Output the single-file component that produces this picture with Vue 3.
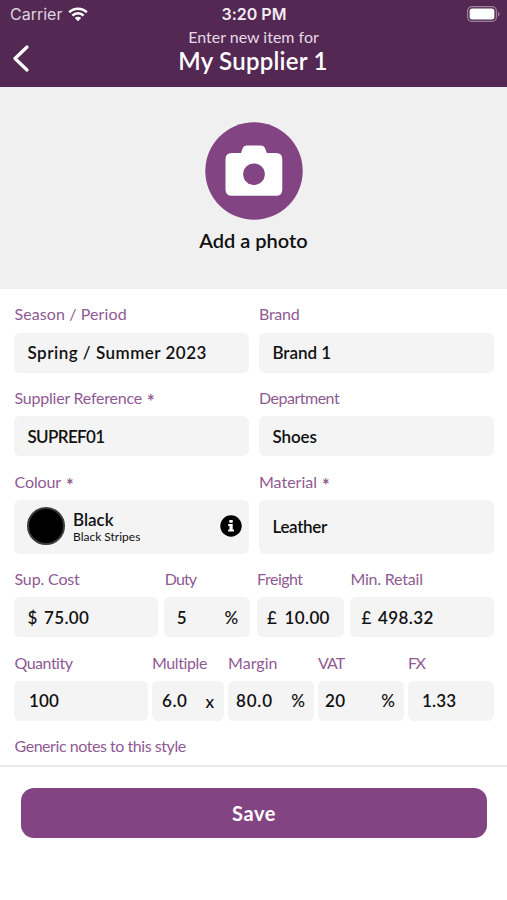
<script setup>
// `track` is the letter-spacing in hundredths of a pixel.
const rows = [
  {
    kind: 'half',
    fields: [
      { label: 'Season / Period', track: 10, value: 'Spring / Summer 2023', vtrack: 50 },
      { label: 'Brand', track: -25, value: 'Brand 1', vtrack: -5 },
    ],
  },
  {
    kind: 'half',
    fields: [
      { label: 'Supplier Reference', required: true, track: -22, value: 'SUPREF01', vtrack: -65 },
      { label: 'Department', track: -50, value: 'Shoes', vtrack: -10 },
    ],
  },
  {
    kind: 'half tall',
    fields: [
      { label: 'Colour', required: true, track: -10, swatch: true, value: 'Black', vtrack: 0, note: 'Black Stripes' },
      { label: 'Material', required: true, track: 0, value: 'Leather', vtrack: -35 },
    ],
  },
  {
    kind: 'costs',
    fields: [
      { label: 'Sup. Cost', track: -15, prefix: '$', value: '75.00', vtrack: 35 },
      { label: 'Duty', track: -90, value: '5', suffix: '%', vtrack: 0 },
      { label: 'Freight', track: -50, prefix: '£', value: '10.00', vtrack: 35 },
      { label: 'Min. Retail', track: -20, prefix: '£', value: '498.32', vtrack: 45 },
    ],
  },
  {
    kind: 'amounts',
    fields: [
      { label: 'Quantity', track: -50, value: '100', vtrack: 10 },
      { label: 'Multiple', track: -40, value: '6.0', suffix: 'x', vtrack: 60 },
      { label: 'Margin', track: 5, value: '80.0', suffix: '%', vtrack: 80 },
      { label: 'VAT', track: -100, value: '20', suffix: '%', vtrack: 50 },
      { label: 'FX', track: -150, value: '1.33', vtrack: 20 },
    ],
  },
]
const px = (n) => ({ letterSpacing: n / 100 + 'px' })
</script>

<template>
  <div class="screen">
    <header class="top">
      <div class="status">
        <div class="carrier">
          <span>Carrier</span>
          <svg class="wifi" viewBox="0 0 20 15" width="20" height="15">
            <path d="M1.2 5.3 A12.6 12.6 0 0 1 18.8 5.3" />
            <path d="M4.4 8.6 A8 8 0 0 1 15.6 8.6" />
            <path class="dot" d="M6.8 11 A4.6 4.6 0 0 1 13.2 11 L10 14.3 Z" />
          </svg>
        </div>
        <span class="time">3:20 PM</span>
        <svg class="battery" viewBox="0 0 33 16" width="33" height="16">
          <rect class="shell" x="0.6" y="0.6" width="28.8" height="14.8" rx="4.4" />
          <rect x="2.6" y="2.6" width="24.8" height="10.8" rx="2.6" fill="#fff" />
          <path d="M31 5.4 Q32.6 6.4 32.6 8 Q32.6 9.6 31 10.6 Z" fill="#9c829a" />
        </svg>
      </div>
      <div class="nav">
        <svg class="back" viewBox="0 0 18 28" width="18" height="28">
          <path d="M15 3 L3 14.5 L15 26" />
        </svg>
        <div class="heading">
          <p class="sub">Enter new item for</p>
          <h1>My Supplier 1</h1>
        </div>
      </div>
    </header>

    <section class="photo">
      <svg class="camera" viewBox="0 0 98 98" width="98" height="98">
        <circle cx="49" cy="49" r="48.7" fill="#824482" />
        <path
          d="M27 31 H36 L37.4 27 Q38.6 23.6 42 23.6 H55.6 Q59 23.6 60.4 27 L61.8 31 H71 Q77.3 31 77.3 37.3 V67.5 Q77.3 73.8 71 73.8 H27 Q20.5 73.8 20.5 67.5 V37.3 Q20.5 31 27 31 Z"
          fill="#fff"
        />
        <circle cx="49" cy="52.2" r="10.8" fill="#824482" />
      </svg>
      <span class="add">Add a photo</span>
    </section>

    <main class="form">
      <div v-for="(row, r) in rows" :key="r" class="row" :class="row.kind">
        <div v-for="f in row.fields" :key="f.label" class="field">
          <div class="label">
            <span :style="px(f.track)">{{ f.label }}</span>
            <span v-if="f.required" class="star">*</span>
          </div>
          <div class="box" :class="{ colour: f.swatch }">
            <span v-if="f.swatch" class="swatch"></span>
            <span v-if="f.prefix" class="prefix">{{ f.prefix }}</span>
            <span class="texts">
              <span class="value" :style="px(f.vtrack)">{{ f.value }}</span>
              <span v-if="f.note" class="note">{{ f.note }}</span>
            </span>
            <span v-if="f.suffix" class="suffix" :class="{ times: f.suffix === 'x' }">{{ f.suffix }}</span>
            <svg v-if="f.swatch" class="info" viewBox="0 0 22 22" width="22" height="22">
              <circle cx="11" cy="11" r="10.7" />
              <path
                fill="#fff"
                d="M9.3 4.9 H12.7 V7.8 H9.3 Z M8.2 9 H12.7 V14.6 H14 V16.6 H8.2 V14.6 H9.5 V11 H8.2 Z"
              />
            </svg>
          </div>
        </div>
      </div>
      <div class="label notes">Generic notes to this style</div>
    </main>

    <footer class="bottom">
      <button class="save">Save</button>
    </footer>
  </div>
</template>

<style>
body {
  background: #fff;
}
</style>

<style scoped>
.screen {
  width: 507px;
  height: 900px;
  overflow: hidden;
  background: #fff;
  color: #111;
  font-family: Lato, 'Liberation Sans', sans-serif;
  font-variant-ligatures: none;
}
.top {
  height: 87px;
  background: #532853;
  color: #fff;
}
.status {
  display: grid;
  grid-template-columns: 1fr auto 1fr;
  height: 27px;
  padding: 1px 9px 0 10px;
  box-sizing: border-box;
  align-items: center;
  font-family: Inter, sans-serif;
  font-size: 16px;
}
.carrier {
  display: flex;
  align-items: center;
  gap: 6px;
  color: #dfd3df;
}
.wifi {
  fill: none;
  stroke: #fff;
  stroke-width: 2.6;
}
.wifi .dot {
  fill: #fff;
  stroke: none;
}
.time {
  color: #f3ebf3;
  font-weight: 600;
}
.battery {
  justify-self: end;
  margin-right: -2px;
}
.shell {
  fill: none;
  stroke: #9c829a;
  stroke-width: 1.2;
}
.nav {
  display: grid;
  grid-template-columns: 40px 1fr 40px;
}
.back {
  margin: 17px 0 0 12px;
  fill: none;
  stroke: #fff;
  stroke-width: 3.2;
  stroke-linecap: round;
  stroke-linejoin: round;
}
.heading {
  text-align: center;
}
.sub {
  margin: 0;
  font-size: 16px;
  line-height: 19px;
  color: #e6d9e6;
}
h1 {
  margin: 1px 0 0 -1px;
  font-size: 24px;
  line-height: 28px;
  font-weight: 600;
  letter-spacing: 0.25px;
}
.photo {
  display: flex;
  flex-direction: column;
  align-items: center;
  height: 202px;
  padding-top: 35px;
  box-sizing: border-box;
  background: #f0f0f0;
}
.add {
  margin-top: 7px;
  font-size: 20px;
  line-height: 26px;
  font-weight: 600;
}
.form {
  height: 476px;
  padding: 0 13px 0 14px;
}
.row {
  display: grid;
}
.half {
  grid-template-columns: 235px 235px;
  column-gap: 10px;
}
.costs {
  grid-template-columns: 144px 86px 87px 144px;
  column-gap: 6.3px;
}
.amounts {
  grid-template-columns: 134px 72px 86px 86px 86px;
  column-gap: 4px;
}
.label {
  height: 43.6px;
  padding: 14.4px 0 0 0.5px;
  box-sizing: border-box;
  font-size: 16px;
  line-height: 22px;
  color: #8f5a93;
  white-space: nowrap;
}
.half .field + .field .label,
.amounts .field + .field .label {
  padding-left: 0;
}
.star {
  margin-left: 5px;
  font-size: 18px;
  line-height: 1;
  font-weight: 700;
  vertical-align: -4px;
}
.box {
  display: flex;
  align-items: center;
  height: 40px;
  padding: 0 12px 0 13.5px;
  box-sizing: border-box;
  border-radius: 6px;
  background: #f4f4f4;
  font-size: 17px;
  line-height: 21px;
  font-weight: 600;
  white-space: nowrap;
}
.tall .box {
  height: 54px;
}
.texts {
  display: flex;
  flex-direction: column;
}
.prefix {
  width: 16.5px;
  font-weight: 500;
}
.suffix {
  margin-left: auto;
  font-weight: 500;
  font-size: 17px;
}
.times {
  padding: 2px 1px 0 0;
}
.costs .field:nth-child(2) .box {
  padding-left: 12.5px;
}
.costs .field:nth-child(3) .box {
  padding-left: 10.5px;
}
.costs .field:nth-child(3) .prefix {
  width: 17.5px;
}
.costs .field:nth-child(4) .box {
  padding-left: 11.5px;
}
.amounts .box {
  padding: 0 9px 0 8px;
}
.amounts .field:first-child .box {
  padding-left: 15px;
}
.amounts .field:last-child .box {
  padding-left: 14px;
}
.amounts .field:nth-child(2) .box {
  padding-left: 10px;
}
.amounts .field:nth-child(4) .box {
  padding-left: 7px;
}
.swatch {
  width: 38px;
  height: 38px;
  margin-right: 8px;
  box-sizing: border-box;
  border: 2.5px solid #3a3c3c;
  border-radius: 50%;
  background: #000;
}
.box.colour {
  padding: 0 7px 1px 13px;
}
.colour .texts {
  padding-top: 3px;
}
.colour .value {
  line-height: 18px;
}
.note {
  font-size: 12px;
  line-height: 15px;
  font-weight: 400;
}
.info {
  margin-left: auto;
}
.notes {
  letter-spacing: -0.45px;
}
.bottom {
  height: 135px;
  padding: 21px 20px 0 21px;
  box-sizing: border-box;
  border-top: 2px solid #e8e8e8;
}
.save {
  display: block;
  width: 100%;
  height: 50px;
  padding: 0;
  border: 0;
  border-radius: 13px;
  background: #824482;
  color: #fff;
  font: 700 20px/50px Lato, sans-serif;
  letter-spacing: 0.6px;
}
</style>
